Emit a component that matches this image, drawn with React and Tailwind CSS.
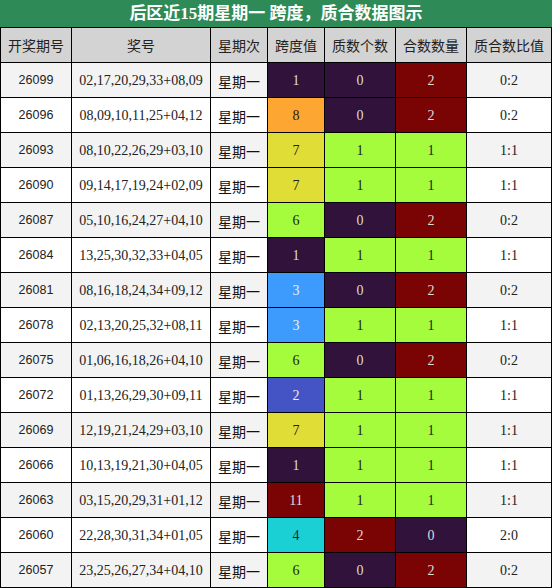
import React from 'react';

const rows = [
  ['26099', '02,17,20,29,33+08,09', 1, 0, 2],
  ['26096', '08,09,10,11,25+04,12', 8, 0, 2],
  ['26093', '08,10,22,26,29+03,10', 7, 1, 1],
  ['26090', '09,14,17,19,24+02,09', 7, 1, 1],
  ['26087', '05,10,16,24,27+04,10', 6, 0, 2],
  ['26084', '13,25,30,32,33+04,05', 1, 1, 1],
  ['26081', '08,16,18,24,34+09,12', 3, 0, 2],
  ['26078', '02,13,20,25,32+08,11', 3, 1, 1],
  ['26075', '01,06,16,18,26+04,10', 6, 0, 2],
  ['26072', '01,13,26,29,30+09,11', 2, 1, 1],
  ['26069', '12,19,21,24,29+03,10', 7, 1, 1],
  ['26066', '10,13,19,21,30+04,05', 1, 1, 1],
  ['26063', '03,15,20,29,31+01,12', 11, 1, 1],
  ['26060', '22,28,30,31,34+01,05', 4, 2, 0],
  ['26057', '23,25,26,27,34+04,10', 6, 0, 2],
];

const spanColor = {
  1: 'bg-[#30123b] text-[#dddddd]',
  2: 'bg-[#4454c4] text-[#eeeeee]',
  3: 'bg-[#3e9bfe] text-[#eeeeee]',
  4: 'bg-[#1bd0d5] text-[#222222]',
  6: 'bg-[#a4fc3c] text-[#222222]',
  7: 'bg-[#e1dd37] text-[#222222]',
  8: 'bg-[#fea632] text-[#222222]',
  11: 'bg-[#7a0403] text-[#dddddd]',
};

const countColor = {
  0: 'bg-[#30123b] text-[#dddddd]',
  1: 'bg-[#a4fc3c] text-[#222222]',
  2: 'bg-[#7a0403] text-[#dddddd]',
};

const serif = 'font-["Liberation_Serif","Noto_Sans_CJK_SC",serif]';
const cjk = 'font-["Noto_Sans_CJK_SC",sans-serif]';

const headers = ['开奖期号', '奖号', '星期次', '跨度值', '质数个数', '合数数量', '质合数比值'];

export default function App() {
  return (
    <div className="w-[552px] h-[588px] bg-white">
      <div className={`h-[27px] bg-[#2e8b57] text-white font-bold text-[17px] flex items-center justify-center ${serif}`}>
        后区近15期星期一 跨度，质合数据图示
      </div>
      <div className="grid grid-cols-[70px_138px_56px_56px_70px_70px_84px] auto-rows-[34px] gap-px p-px bg-black">
        {headers.map((h) => (
          <div key={h} className={`bg-[#d3d3d3] text-[#222] text-[14px] flex items-center justify-center ${cjk}`}>
            {h}
          </div>
        ))}
        {rows.map(([issue, nums, span, prime, comp], i) => {
          const bg = i % 2 === 0 ? 'bg-[#f3f3f3]' : 'bg-white';
          return (
            <React.Fragment key={issue}>
              <div className={`${bg} text-[#222] text-[12.5px] flex items-center justify-center font-["Liberation_Sans",sans-serif]`}>
                {issue}
              </div>
              <div className={`${bg} text-[#222] text-[14px] flex items-center justify-center ${serif}`}>
                {nums}
              </div>
              <div className={`${bg} text-[#111] text-[14px] flex items-center justify-center pt-[3px] ${cjk}`}>
                星期一
              </div>
              <div className={`${spanColor[span]} text-[14px] flex items-center justify-center ${serif}`}>
                {span}
              </div>
              <div className={`${countColor[prime]} text-[14px] flex items-center justify-center ${serif}`}>
                {prime}
              </div>
              <div className={`${countColor[comp]} text-[14px] flex items-center justify-center ${serif}`}>
                {comp}
              </div>
              <div className={`${bg} text-[#222] text-[14px] flex items-center justify-center ${serif}`}>
                {prime}:{comp}
              </div>
            </React.Fragment>
          );
        })}
      </div>
    </div>
  );
}
